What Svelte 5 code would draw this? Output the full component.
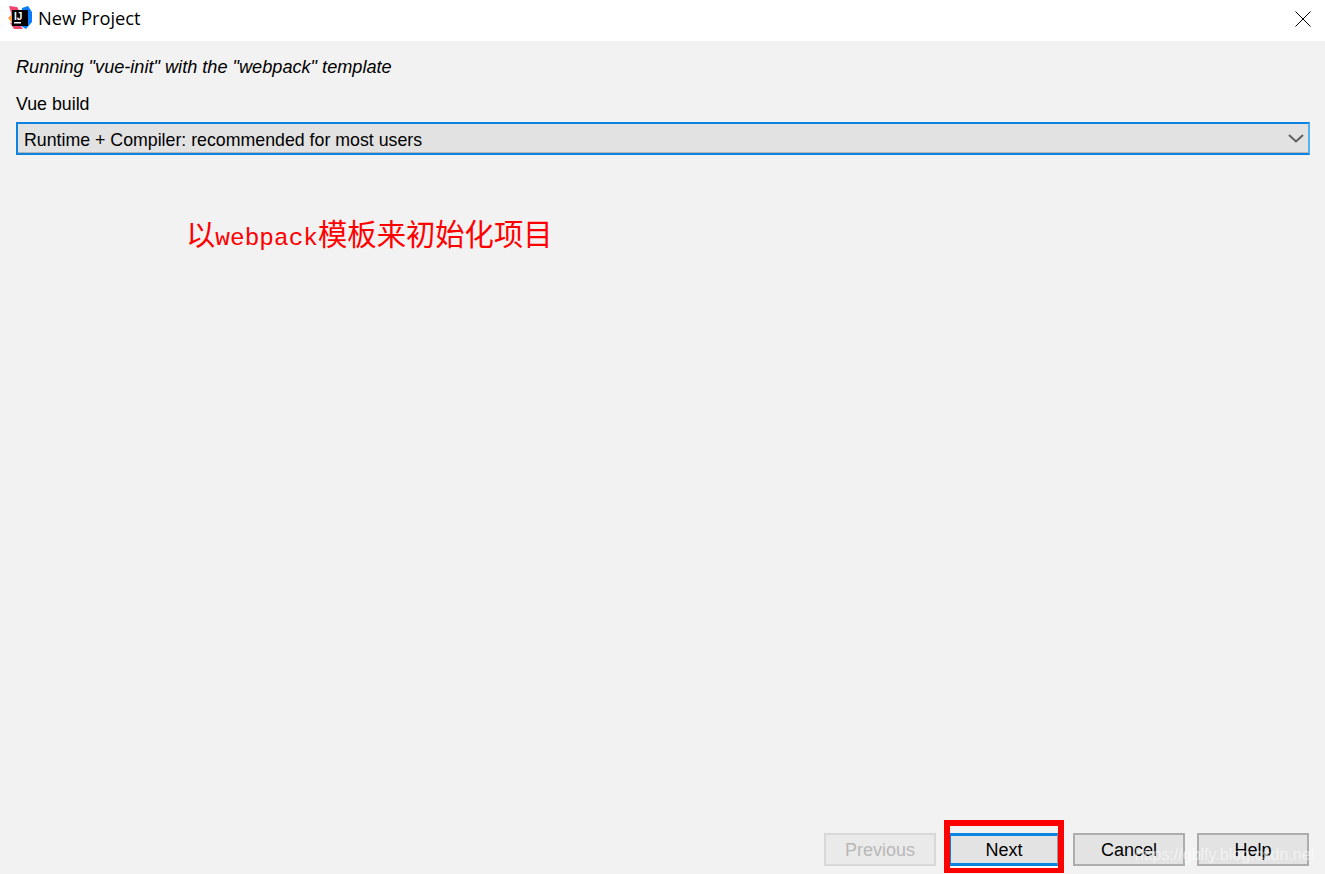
<script>
	const buttons = ['Cancel', 'Help']
</script>

<div class="dialog">
	<header class="titlebar">
		<svg class="logo" viewBox="0 0 24 24" width="24" height="24">
			<path d="M0 12 L4 8 L6 12 L4 17 Z" fill="#f9a03c" />
			<path d="M1 0 L9 1 L12 6 L4 10 Z" fill="#f0476f" />
			<path d="M2 17 L9 15 L15 23 L6 23 Z" fill="#f0476f" />
			<path d="M14 2 L20 0 L24 6 L24 16 L18 23 L13 20 Z" fill="#087cfa" />
			<rect x="4" y="4" width="16" height="16" fill="#000" />
			<rect x="6" y="16" width="7" height="1.5" fill="#fff" />
			<text x="6" y="13.5" class="logo-text">IJ</text>
		</svg>
		<span class="title">New Project</span>
		<svg class="close" viewBox="0 0 16 16" width="16" height="16">
			<path d="M0.5 0.5 L15.5 15.5 M15.5 0.5 L0.5 15.5" stroke="#000" fill="none" />
		</svg>
	</header>

	<main class="content">
		<p class="running">Running "vue-init" with the "webpack" template</p>
		<label class="field-label" for="build">Vue build</label>
		<div class="select" id="build">
			<span>Runtime + Compiler: recommended for most users</span>
			<svg viewBox="0 0 16 9" width="16" height="9">
				<path d="M1 1 L8 7.5 L15 1" stroke="#606060" stroke-width="2" fill="none" />
			</svg>
		</div>
		<p class="note">以<span class="latin">webpack</span>模板来初始化项目</p>
	</main>

	<footer class="actions">
		<button class="btn" disabled>Previous</button>
		<div class="highlight">
			<button class="btn primary">Next</button>
		</div>
		{#each buttons as b}
			<button class="btn">{b}</button>
		{/each}
		<span class="watermark">https://gblfy.blog.csdn.net</span>
	</footer>
</div>

<style>
	:global(body) {
		margin: 0;
		background: #f2f2f2;
	}

	.dialog {
		position: relative;
		display: flex;
		flex-direction: column;
		height: 874px;
		overflow: hidden;
		font-family: "Liberation Sans", Arial, sans-serif;
		color: #000;
		background: #f2f2f2;
	}

	.titlebar {
		display: flex;
		align-items: center;
		height: 41px;
		box-sizing: border-box;
		padding: 0 14px 5px 8px;
		background: #fff;
	}

	.logo {
		flex: none;
	}

	.logo-text {
		font-family: "Liberation Sans", sans-serif;
		font-size: 10px;
		font-weight: 700;
		fill: #fff;
	}

	.title {
		margin: -2px 0 0 6px;
		font-family: "Open Sans", "Noto Sans", sans-serif;
		font-size: 18.3px;
	}

	.close {
		margin-left: auto;
		margin-top: 1px;
	}

	.content {
		flex: 1;
		padding: 0 16px;
	}

	.running {
		margin: 16px 0 0;
		font-size: 18.15px;
		line-height: 20px;
		font-style: italic;
	}

	.field-label {
		display: block;
		margin-top: 17px;
		font-size: 17.8px;
		line-height: 20px;
	}

	.select {
		display: flex;
		align-items: center;
		justify-content: space-between;
		box-sizing: border-box;
		height: 33px;
		margin: 8px -1px 0 0;
		padding: 3px 4px 0 6px;
		border: 2px solid #0a84e0;
		border-right-color: #55b0f0;
		box-shadow: inset 0 -1px 0 #b5b5b5;
		background: #e2e2e2;
		font-size: 17.75px;
	}

	.select svg {
		margin-top: -3px;
	}

	.note {
		margin: 60px 0 0 170px;
		font-family: "Noto Sans CJK SC", sans-serif;
		font-size: 29.33px;
		line-height: 34px;
		color: #f00;
	}

	.latin {
		font-family: "Liberation Mono", monospace;
		font-size: 24.44px;
	}

	.actions {
		position: relative;
		display: flex;
		align-items: flex-start;
		justify-content: flex-end;
		gap: 12px;
		height: 54px;
		padding-right: 16px;
	}

	.btn {
		box-sizing: border-box;
		width: 112px;
		height: 33px;
		margin-top: 13px;
		padding: 2px 0 0;
		border: 2px solid #adadad;
		background: #e3e3e3;
		font-family: "Liberation Sans", Arial, sans-serif;
		font-size: 18px;
		color: #000;
	}

	.btn:disabled {
		border-color: #d8d8d8;
		background: #eaeaea;
		color: #b8b8b8;
	}

	.highlight {
		box-sizing: border-box;
		width: 120px;
		height: 53px;
		margin: 0 -3px 0 -4px;
		padding-top: 7px;
		border: solid #f00;
		border-width: 6px 6px 5px;
	}

	.primary {
		display: block;
		width: 108px;
		margin-top: 0;
		border-width: 3px 1px;
		border-color: #0a84e0 #9a9a9a #0a84e0 #0a84e0;
		box-shadow: 0 2px 0 #fff;
	}

	.watermark {
		position: absolute;
		right: 10px;
		bottom: 10px;
		font-size: 16px;
		color: rgba(255, 255, 255, 0.55);
	}
</style>
